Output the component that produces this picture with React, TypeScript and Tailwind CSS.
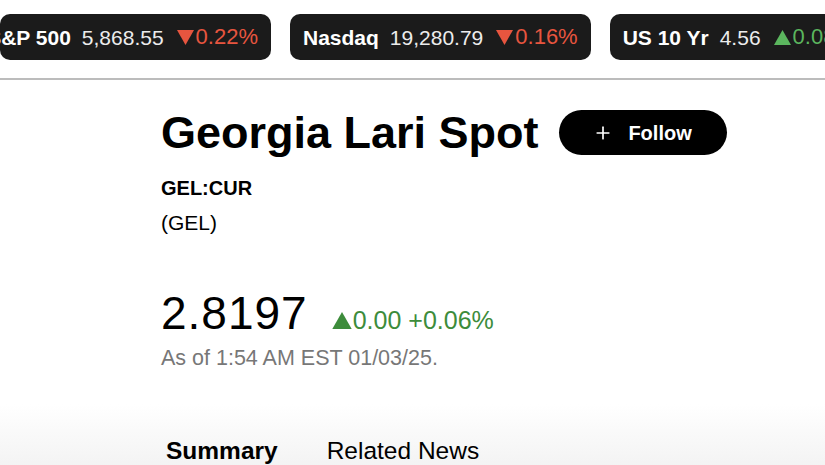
import { Plus } from 'lucide-react';

const tickers = [
  { name: 'S&P 500', value: '5,868.55', change: '0.22%', up: false },
  { name: 'Nasdaq', value: '19,280.79', change: '0.16%', up: false },
  { name: 'US 10 Yr', value: '4.56', change: '0.08', up: true },
];

function Triangle({ up, className }: { up: boolean; className: string }) {
  return (
    <svg viewBox="0 0 16 14" className={className} fill="currentColor">
      {up ? <path d="M8 0 L16 14 L0 14 Z" /> : <path d="M0 0 L16 0 L8 14 Z" />}
    </svg>
  );
}

function TickerPill({ t, first }: { t: (typeof tickers)[number]; first?: boolean }) {
  return (
    <div
      className={`flex h-[46px] shrink-0 items-center gap-[11px] overflow-hidden rounded-[10px] bg-[#1b1b1b] text-[21px] leading-none ${
        first ? 'w-[271px] justify-end pr-[13px]' : 'px-[13px]'
      }`}
    >
      <span className="shrink-0 whitespace-nowrap font-bold text-white">{t.name}</span>
      <span className="shrink-0 whitespace-nowrap text-[#ececec]">{t.value}</span>
      <span
        className={`ml-[2px] flex shrink-0 items-center gap-[2px] whitespace-nowrap text-[22px] ${
          t.up ? 'text-[#5bb65e]' : 'text-[#e7553f]'
        }`}
      >
        <Triangle up={t.up} className="h-[15px] w-[17px]" />
        {t.change}
      </span>
    </div>
  );
}

export default function App() {
  return (
    <div className="h-[465px] w-full overflow-hidden bg-white font-['Liberation_Sans',Arial,sans-serif] text-black">
      {/* Ticker strip */}
      <div className="flex h-[78px] gap-[19px] overflow-hidden pt-[14px]">
        {tickers.map((t, i) => (
          <TickerPill key={t.name} t={t} first={i === 0} />
        ))}
      </div>
      <div className="h-[2px] bg-[#bcbcbc]" />

      <div className="pl-[161px]">
        {/* Title */}
        <div className="mt-[30px] flex h-[45px] items-center gap-[20px]">
          <h1 className="text-[45px] font-bold leading-[45px]">Georgia Lari Spot</h1>
          <button className="flex h-[45px] w-[168px] items-center justify-center gap-[15px] rounded-full bg-black text-[20px] font-bold text-white">
            <Plus className="h-[20px] w-[20px]" strokeWidth={2} />
            Follow
          </button>
        </div>

        <div className="mt-[21px] text-[20px] font-bold leading-[24px]">GEL:CUR</div>
        <div className="mt-[11px] text-[21px] leading-[24px]">(GEL)</div>

        {/* Price */}
        <div className="mt-[55px] flex items-baseline gap-[24px]">
          <span className="text-[46px] leading-[46px] tracking-[1px]">2.8197</span>
          <span className="flex items-baseline gap-[1px] text-[25px] leading-[25px] text-[#3d8c3b]">
            <Triangle up className="h-[17px] w-[20px] self-center" />
            0.00 +0.06%
          </span>
        </div>
        <div className="mt-[10px] text-[21.5px] leading-[24px] text-[#777777]">As of 1:54 AM EST 01/03/25.</div>
      </div>

      {/* Tabs */}
      <div className="mt-[10px] h-[200px] bg-gradient-to-b from-white from-[12%] to-[#ededed] to-[60%] pt-[57px]">
        <div className="flex gap-[49px] pl-[166px] text-[24.5px] leading-[28px]">
          <span className="font-bold">Summary</span>
          <span>Related News</span>
        </div>
      </div>
    </div>
  );
}
